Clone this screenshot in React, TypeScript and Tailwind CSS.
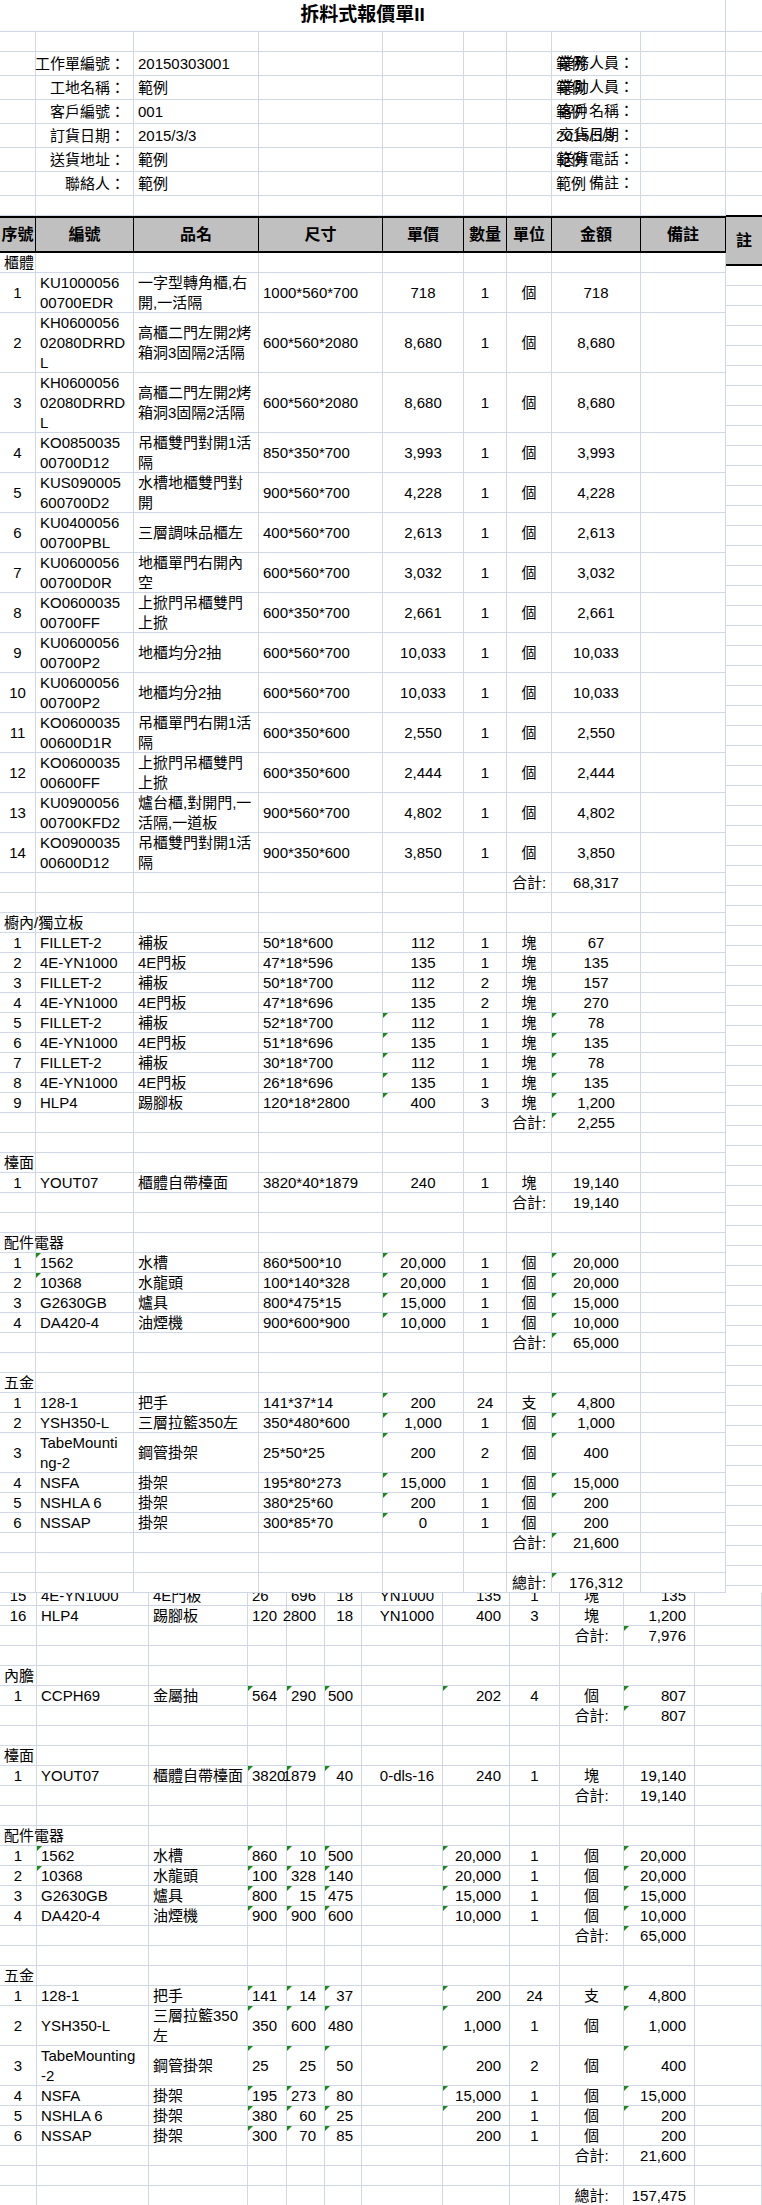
import React from 'react';

type C = { t?: string; a?: 'l' | 'c' | 'r'; g?: boolean };

const TOPW = ['w-[36px]', 'w-[98px]', 'w-[125px]', 'w-[124px]', 'w-[81px]', 'w-[43px]', 'w-[45px]', 'w-[89px]', 'w-[85px]'];
const BOTW = ['w-[37px]', 'w-[112px]', 'w-[99px]', 'w-[39px]', 'w-[38px]', 'w-[37px]', 'w-[81px]', 'w-[67px]', 'w-[50px]', 'w-[64px]', 'w-[71px]', 'w-[67px]'];
const H: Record<number, string> = { 20: 'h-[20px]', 40: 'h-[40px]', 60: 'h-[60px]', 24: 'h-[24px]', 32: 'h-[32px]', 13: 'h-[13px]' };

const Tri = () => (
  <span className="absolute left-0 top-0 h-0 w-0 border-t-[5px] border-r-[5px] border-t-[#1a8a1a] border-r-transparent" />
);

function Cell({ w, c, h }: { w: string; c: C; h: number }) {
  const align = c.a === 'c' ? 'justify-center text-center' : c.a === 'r' ? 'justify-end text-right pr-2' : 'justify-start pl-1';
  return (
    <div className={`relative flex shrink-0 items-center whitespace-pre border-r border-b border-[#d0d7e5] leading-[20px] ${w} ${H[h]} ${align}`}>
      {c.g && <Tri />}
      {c.t}
    </div>
  );
}

function Row({ widths, cells, h = 20, clip }: { widths: string[]; cells: C[]; h?: number; clip?: boolean }) {
  return (
    <div className={`flex ${clip ? 'h-[13px] items-end overflow-hidden' : ''}`}>
      {widths.map((w, i) => (
        <Cell key={i} w={w} h={h} c={cells[i] || {}} />
      ))}
    </div>
  );
}

// top sheet rows
const item = (s: string, code: string, name: string, size: string, price: string, qty: string, unit: string, amt: string, h = 20, g: number[] = []) => ({
  h,
  cells: [
    { t: s, a: 'c' },
    { t: code, g: g.includes(1) },
    { t: name },
    { t: size },
    { t: price, a: 'c', g: g.includes(4) },
    { t: qty, a: 'c' },
    { t: unit, a: 'c' },
    { t: amt, a: 'c', g: g.includes(7) },
    {},
  ] as C[],
});
const label = (t: string) => ({ h: 20, cells: [{ t }] as C[] });
const blank = { h: 20, cells: [] as C[] };
const total = (lab: string, v: string, g = false) => ({ h: 20, cells: [{}, {}, {}, {}, {}, {}, { t: lab, a: 'c' }, { t: v, a: 'c', g }, {}] as C[] });

const pa = [4, 7];
const topRows = [
  label('櫃體'),
  item('1', 'KU1000056\n00700EDR', '一字型轉角櫃,右\n開,一活隔', '1000*560*700', '718', '1', '個', '718', 40),
  item('2', 'KH0600056\n02080DRRD\nL', '高櫃二門左開2烤\n箱洞3固隔2活隔', '600*560*2080', '8,680', '1', '個', '8,680', 60),
  item('3', 'KH0600056\n02080DRRD\nL', '高櫃二門左開2烤\n箱洞3固隔2活隔', '600*560*2080', '8,680', '1', '個', '8,680', 60),
  item('4', 'KO0850035\n00700D12', '吊櫃雙門對開1活\n隔', '850*350*700', '3,993', '1', '個', '3,993', 40),
  item('5', 'KUS090005\n600700D2', '水槽地櫃雙門對\n開', '900*560*700', '4,228', '1', '個', '4,228', 40),
  item('6', 'KU0400056\n00700PBL', '三層調味品櫃左', '400*560*700', '2,613', '1', '個', '2,613', 40),
  item('7', 'KU0600056\n00700D0R', '地櫃單門右開內\n空', '600*560*700', '3,032', '1', '個', '3,032', 40),
  item('8', 'KO0600035\n00700FF', '上掀門吊櫃雙門\n上掀', '600*350*700', '2,661', '1', '個', '2,661', 40),
  item('9', 'KU0600056\n00700P2', '地櫃均分2抽', '600*560*700', '10,033', '1', '個', '10,033', 40),
  item('10', 'KU0600056\n00700P2', '地櫃均分2抽', '600*560*700', '10,033', '1', '個', '10,033', 40),
  item('11', 'KO0600035\n00600D1R', '吊櫃單門右開1活\n隔', '600*350*600', '2,550', '1', '個', '2,550', 40),
  item('12', 'KO0600035\n00600FF', '上掀門吊櫃雙門\n上掀', '600*350*600', '2,444', '1', '個', '2,444', 40),
  item('13', 'KU0900056\n00700KFD2', '爐台櫃,對開門,一\n活隔,一道板', '900*560*700', '4,802', '1', '個', '4,802', 40),
  item('14', 'KO0900035\n00600D12', '吊櫃雙門對開1活\n隔', '900*350*600', '3,850', '1', '個', '3,850', 40),
  total('合計:', '68,317'),
  blank,
  label('櫥內/獨立板'),
  item('1', 'FILLET-2', '補板', '50*18*600', '112', '1', '塊', '67'),
  item('2', '4E-YN1000', '4E門板', '47*18*596', '135', '1', '塊', '135'),
  item('3', 'FILLET-2', '補板', '50*18*700', '112', '2', '塊', '157'),
  item('4', '4E-YN1000', '4E門板', '47*18*696', '135', '2', '塊', '270'),
  item('5', 'FILLET-2', '補板', '52*18*700', '112', '1', '塊', '78', 20, pa),
  item('6', '4E-YN1000', '4E門板', '51*18*696', '135', '1', '塊', '135', 20, pa),
  item('7', 'FILLET-2', '補板', '30*18*700', '112', '1', '塊', '78', 20, pa),
  item('8', '4E-YN1000', '4E門板', '26*18*696', '135', '1', '塊', '135', 20, pa),
  item('9', 'HLP4', '踢腳板', '120*18*2800', '400', '3', '塊', '1,200', 20, pa),
  total('合計:', '2,255', true),
  blank,
  label('檯面'),
  item('1', 'YOUT07', '櫃體自帶檯面', '3820*40*1879', '240', '1', '塊', '19,140'),
  total('合計:', '19,140'),
  blank,
  label('配件電器'),
  item('1', '1562', '水槽', '860*500*10', '20,000', '1', '個', '20,000', 20, [1, 4, 7]),
  item('2', '10368', '水龍頭', '100*140*328', '20,000', '1', '個', '20,000', 20, [1, 4, 7]),
  item('3', 'G2630GB', '爐具', '800*475*15', '15,000', '1', '個', '15,000', 20, pa),
  item('4', 'DA420-4', '油煙機', '900*600*900', '10,000', '1', '個', '10,000', 20, pa),
  total('合計:', '65,000', true),
  blank,
  label('五金'),
  item('1', '128-1', '把手', '141*37*14', '200', '24', '支', '4,800', 20, pa),
  item('2', 'YSH350-L', '三層拉籃350左', '350*480*600', '1,000', '1', '個', '1,000', 20, pa),
  item('3', 'TabeMounti\nng-2', '鋼管掛架', '25*50*25', '200', '2', '個', '400', 40, pa),
  item('4', 'NSFA', '掛架', '195*80*273', '15,000', '1', '個', '15,000', 20, pa),
  item('5', 'NSHLA 6', '掛架', '380*25*60', '200', '1', '個', '200', 20, pa),
  item('6', 'NSSAP', '掛架', '300*85*70', '0', '1', '個', '200', 20, [4]),
  total('合計:', '21,600', true),
  blank,
  total('總計:', '176,312', true),
];

// bottom sheet rows
const bi = (s: string, code: string, name: string, d1: string, d2: string, d3: string, m: string, price: string, qty: string, unit: string, amt: string, h = 20, g: number[] = []) => ({
  h,
  cells: [
    { t: s, a: 'c' },
    { t: code, g: g.includes(1) },
    { t: name },
    { t: d1, g: g.includes(3) },
    { t: d2, a: 'r', g: g.includes(4) },
    { t: d3, a: 'r', g: g.includes(5) },
    { t: m, a: 'r' },
    { t: price, a: 'r', g: g.includes(7) },
    { t: qty, a: 'c' },
    { t: unit, a: 'c' },
    { t: amt, a: 'r', g: g.includes(10) },
    {},
  ] as C[],
});
const btotal = (lab: string, v: string, g = false) => ({
  h: 20,
  cells: [{}, {}, {}, {}, {}, {}, {}, {}, {}, { t: lab, a: 'c' }, { t: v, a: 'r', g }, {}] as C[],
});
const dg = [3, 4, 5, 7, 10];
const botRows = [
  bi('16', 'HLP4', '踢腳板', '120', '2800', '18', 'YN1000', '400', '3', '塊', '1,200'),
  btotal('合計:', '7,976', true),
  blank,
  label('內膽'),
  bi('1', 'CCPH69', '金屬抽', '564', '290', '500', '', '202', '4', '個', '807', 20, dg),
  btotal('合計:', '807', true),
  blank,
  label('檯面'),
  bi('1', 'YOUT07', '櫃體自帶檯面', '3820', '1879', '40', '0-dls-16', '240', '1', '塊', '19,140', 20, [3, 4, 5]),
  btotal('合計:', '19,140'),
  blank,
  label('配件電器'),
  bi('1', '1562', '水槽', '860', '10', '500', '', '20,000', '1', '個', '20,000', 20, [1, ...dg]),
  bi('2', '10368', '水龍頭', '100', '328', '140', '', '20,000', '1', '個', '20,000', 20, [1, ...dg]),
  bi('3', 'G2630GB', '爐具', '800', '15', '475', '', '15,000', '1', '個', '15,000', 20, dg),
  bi('4', 'DA420-4', '油煙機', '900', '900', '600', '', '10,000', '1', '個', '10,000', 20, dg),
  btotal('合計:', '65,000', true),
  blank,
  label('五金'),
  bi('1', '128-1', '把手', '141', '14', '37', '', '200', '24', '支', '4,800', 20, dg),
  bi('2', 'YSH350-L', '三層拉籃350\n左', '350', '600', '480', '', '1,000', '1', '個', '1,000', 40, dg),
  bi('3', 'TabeMounting\n-2', '鋼管掛架', '25', '25', '50', '', '200', '2', '個', '400', 40, dg),
  bi('4', 'NSFA', '掛架', '195', '273', '80', '', '15,000', '1', '個', '15,000', 20, dg),
  bi('5', 'NSHLA 6', '掛架', '380', '60', '25', '', '200', '1', '個', '200', 20, dg),
  bi('6', 'NSSAP', '掛架', '300', '70', '85', '', '200', '1', '個', '200', 20, [3, 4, 5]),
  btotal('合計:', '21,600'),
  blank,
  btotal('總計:', '157,475'),
];

const info: [string, string, string, string][] = [
  ['工作單編號：', '20150303001', '業務人員：', '範例'],
  ['工地名稱：', '範例', '業助人員：', '範例'],
  ['客戶編號：', '001', '客戶名稱：', '範例'],
  ['訂貨日期：', '2015/3/3', '交貨日期：', '2015/5/3'],
  ['送貨地址：', '範例', '送貨電話：', '範例'],
  ['聯絡人：', '範例', '備註：', '範例'],
];

const headers = ['序號', '編號', '品名', '尺寸', '單價', '數量', '單位', '金額', '備註'];

export default function App() {
  return (
    <div className="w-[762px] bg-white text-[15px] text-black" style={{ fontFamily: '"Liberation Sans", "Noto Sans CJK TC", sans-serif' }}>
      <div className="flex">
        {/* front sheet */}
        <div className="w-[726px] shrink-0">
          <div className="flex h-[32px] items-center justify-center border-r border-b border-[#d0d7e5] text-[19px] font-bold">拆料式報價單II</div>
          <Row widths={TOPW} cells={[]} />
          {info.map((r, i) => (
            <Row
              key={i}
              widths={TOPW}
              h={24}
              cells={[{}, { t: r[0], a: 'r' }, { t: r[1] }, {}, {}, {}, {}, { t: r[3] }, {}]}
            />
          ))}
          <Row widths={TOPW} cells={[]} />
          <div className="flex h-[37px] border-y-2 border-black bg-[#c0c0c0] text-[16px] font-bold">
            {headers.map((t, i) => (
              <div key={i} className={`flex shrink-0 items-center justify-center border-r border-black ${TOPW[i]}`}>{t}</div>
            ))}
          </div>
          {topRows.map((r, i) => (
            <Row key={i} widths={TOPW} cells={r.cells} h={r.h} />
          ))}
        </div>
        {/* back sheet strip */}
        <div className="flex w-[36px] flex-col">
          <div className="h-[32px] border-b border-[#d0d7e5]" />
          <div className="h-[20px] border-b border-[#d0d7e5]" />
          {info.map((_, i) => (
            <div key={i} className="h-[24px] border-b border-[#d0d7e5]" />
          ))}
          <div className="h-[19px]" />
          <div className="flex h-[51px] items-center justify-center border-y-2 border-black bg-[#c0c0c0] text-[16px] font-bold">註</div>
          {Array.from({ length: 66 }).map((_, i) => (
            <div key={i} className="h-[20px] border-b border-[#d0d7e5]" />
          ))}
        </div>
      </div>
      {/* right-hand labels of the info block, drawn over the grid lines like overflowing sheet text */}
      <div className="pointer-events-none absolute left-[460px] top-[51px] flex w-[174px] flex-col">
        {info.map((r, i) => (
          <div key={i} className="flex h-[24px] items-center justify-end whitespace-nowrap">{r[2]}</div>
        ))}
      </div>
      {/* back sheet */}
      <Row widths={BOTW} clip cells={[{ t: '15', a: 'c' }, { t: '4E-YN1000' }, { t: '4E門板' }, { t: '26' }, { t: '696', a: 'r' }, { t: '18', a: 'r' }, { t: 'YN1000', a: 'r' }, { t: '135', a: 'r' }, { t: '1', a: 'c' }, { t: '塊', a: 'c' }, { t: '135', a: 'r' }, {}]} />
      {botRows.map((r, i) => (
        <Row key={i} widths={BOTW} cells={r.cells} h={r.h} />
      ))}
    </div>
  );
}
